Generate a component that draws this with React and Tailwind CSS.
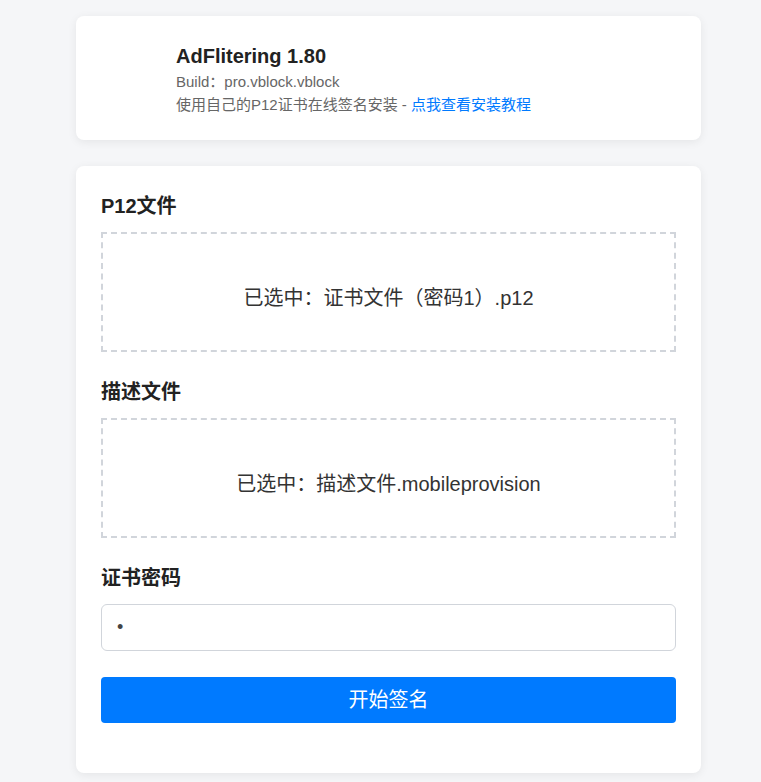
import React from 'react';

const font = { fontFamily: '"Liberation Sans", "Noto Sans CJK SC", Arial, sans-serif' };

const Section = ({ label, children }) => (
  <div className="mb-[25px]">
    <div className="h-[30px] leading-[30px] text-[20px] font-bold text-[#222] mb-[11px]">{label}</div>
    {children}
  </div>
);

const DropBox = ({ text }) => (
  <div className="h-[120px] border-2 border-dashed border-[#d1d5db] flex items-center justify-center pt-[12px] text-[20px] text-[#333]">
    {text}
  </div>
);

export default function App() {
  return (
    <div className="min-h-screen bg-[#f5f6f8] pt-4 pl-[76px] pb-10" style={font}>
      <div className="w-[625px]">
        {/* Header card */}
        <div className="bg-white rounded-lg shadow-[0_2px_10px_rgba(0,0,0,0.07)] h-[124px] pl-[100px] pt-[26px]">
          <div className="text-[20px] leading-[28px] font-bold text-[#222]">AdFlitering 1.80</div>
          <div className="text-[15px] leading-[23px] text-[#666]">Build：pro.vblock.vblock</div>
          <div className="text-[15px] leading-[23px] text-[#666]">
            使用自己的P12证书在线签名安装 - <a className="text-[#007aff]">点我查看安装教程</a>
          </div>
        </div>

        {/* Form card */}
        <div className="mt-[26px] bg-white rounded-lg shadow-[0_2px_10px_rgba(0,0,0,0.07)] px-[25px] pt-[25px] pb-[50px]">
          <Section label="P12文件">
            <DropBox text="已选中：证书文件（密码1）.p12" />
          </Section>
          <Section label="描述文件">
            <DropBox text="已选中：描述文件.mobileprovision" />
          </Section>
          <div className="mb-[26px]">
            <div className="h-[30px] leading-[30px] text-[20px] font-bold text-[#222] mb-[11px]">证书密码</div>
            <input
              type="password"
              value="1"
              readOnly
              className="block w-full h-[47px] border border-[#d1d5db] rounded-md px-[15px] text-[18px] text-[#444] outline-none"
            />
          </div>
          <button className="block w-full h-[46px] bg-[#007aff] rounded text-white text-[20px]">开始签名</button>
        </div>
      </div>
    </div>
  );
}
